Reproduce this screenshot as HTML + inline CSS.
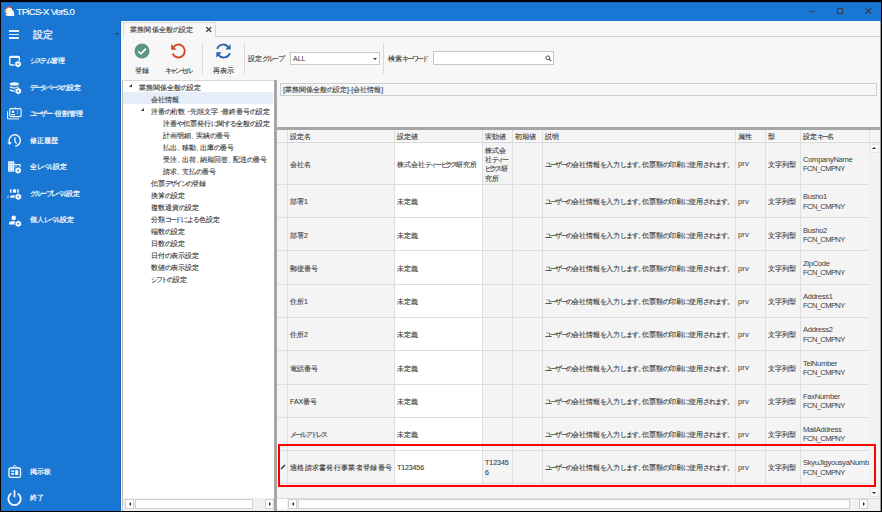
<!DOCTYPE html>
<html><head><meta charset="utf-8"><style>
*{box-sizing:border-box;margin:0;padding:0}
html,body{width:882px;height:512px;overflow:hidden;background:#000;font-family:"Liberation Sans",sans-serif;color:#444;position:relative}
.a{position:absolute}
.t{white-space:nowrap;-webkit-text-stroke:0.12px currentColor}
.k{letter-spacing:-1.8px}
.h{letter-spacing:-1.0px}
.p{letter-spacing:-2.4px}
svg{position:absolute;overflow:visible}
</style></head><body>
<div class="a" style="left:1px;top:2px;width:880px;height:509px;background:#1976d2;"></div>
<svg style="left:4px;top:6px" width="11" height="11" viewBox="0 0 11 11"><path d="M1.5 10 L1.5 5 Q1.8 1.5 5 1.2 Q8 1.5 8.5 4 L10 6 L10.3 10 Z" fill="#fbf8f5"/><path d="M2.5 2.5 Q4.5 0 7 1.2" stroke="#e85a5a" stroke-width="1.3" fill="none"/><path d="M0 4.5 L2.8 4 L2.3 6.3Z" fill="#f7c400"/><path d="M1.2 7 L2.6 7.6" stroke="#1e5ec0" stroke-width="1.1"/><path d="M8.2 1.5 L9 3.5" stroke="#5a4a40" stroke-width="1"/><path d="M1.3 9 L3 10.2" stroke="#6a5a50" stroke-width="1"/></svg>
<div class="a t" style="left:16.5px;top:5.90px;font-size:9.6px;line-height:12px;color:#fff;letter-spacing:-0.72px;-webkit-text-stroke:0.1px #fff">TPiCS-X Ver5.0</div>
<div class="a" style="left:1px;top:2px;width:880px;height:1px;background:#1565c0;"></div>
<div class="a" style="left:809px;top:10.5px;width:6px;height:1.2px;background:#3a3f48;"></div>
<div class="a" style="left:836.5px;top:8.3px;width:6.5px;height:6px;border:1.2px solid #3a3f48"></div>
<svg style="left:864.5px;top:8.2px" width="7" height="6"><path d="M0.5 0.3 L6.3 5.7 M6.3 0.3 L0.5 5.7" stroke="#3a3f48" stroke-width="1.2"/></svg>
<div class="a" style="left:9px;top:30px;width:10px;height:1.5px;background:#e6eef8"></div>
<div class="a" style="left:9px;top:33.5px;width:10px;height:1.5px;background:#e6eef8"></div>
<div class="a" style="left:9px;top:37px;width:10px;height:1.5px;background:#e6eef8"></div>
<div class="a t" style="left:33px;top:29.10px;font-size:9.6px;line-height:12px;color:#eef4fb;-webkit-text-stroke:0.3px #eef4fb">設定</div>
<div class="a" style="left:114.8px;top:32.7px;width:0;height:0;border-left:2px solid transparent;border-right:2px solid transparent;border-top:2.3px solid #3b3b3b"></div>
<div class="a t" style="left:30px;top:55.30px;font-size:7.3px;line-height:11px;color:#f4f8fc;-webkit-text-stroke:0.22px #f4f8fc"><span class="k">システム</span>管理</div>
<div class="a t" style="left:30px;top:81.80px;font-size:7.3px;line-height:11px;color:#f4f8fc;-webkit-text-stroke:0.22px #f4f8fc"><span class="k">データベース</span><span class="h">の</span>設定</div>
<div class="a t" style="left:30px;top:108.30px;font-size:7.3px;line-height:11px;color:#f4f8fc;-webkit-text-stroke:0.22px #f4f8fc"><span class="k">ユーザー</span><span class="p">・</span>役割管理</div>
<div class="a t" style="left:30px;top:134.80px;font-size:7.3px;line-height:11px;color:#f4f8fc;-webkit-text-stroke:0.22px #f4f8fc">修正履歴</div>
<div class="a t" style="left:30px;top:161.30px;font-size:7.3px;line-height:11px;color:#f4f8fc;-webkit-text-stroke:0.22px #f4f8fc">全<span class="k">レベル</span>設定</div>
<div class="a t" style="left:30px;top:187.80px;font-size:7.3px;line-height:11px;color:#f4f8fc;-webkit-text-stroke:0.22px #f4f8fc"><span class="k">グループレベル</span>設定</div>
<div class="a t" style="left:30px;top:214.30px;font-size:7.3px;line-height:11px;color:#f4f8fc;-webkit-text-stroke:0.22px #f4f8fc">個人<span class="k">レベル</span>設定</div>
<div class="a t" style="left:30px;top:465.80px;font-size:7.3px;line-height:11px;color:#f4f8fc;-webkit-text-stroke:0.22px #f4f8fc">掲示板</div>
<div class="a t" style="left:30px;top:492.30px;font-size:7.3px;line-height:11px;color:#f4f8fc;-webkit-text-stroke:0.22px #f4f8fc">終了</div>
<svg style="left:0;top:0" width="120" height="512"><path d="M15 65 L10.8 65 Q9.8 65 9.8 64 L9.8 57.5 Q9.8 56.5 10.8 56.5 L18.3 56.5 Q19.3 56.5 19.3 57.5 L19.3 61" fill="none" stroke="#f4f8fd" stroke-width="1.3"/><rect x="9.8" y="56.2" width="9.5" height="1.8" fill="#f4f8fd"/><circle cx="18" cy="64.1" r="3.7" fill="#1976d2"/><circle cx="18" cy="64.1" r="1.85" fill="none" stroke="#f4f8fd" stroke-width="1.9"/><circle cx="18" cy="64.1" r="2.75" fill="none" stroke="#f4f8fd" stroke-width="0.9" stroke-dasharray="1.1 1.78" transform="rotate(15 18 64.1)"/><ellipse cx="14.3" cy="83.9" rx="4.6" ry="1.6" fill="#f4f8fd"/><path d="M9.8 86.8 Q14.3 89.3 18.8 86.8" fill="none" stroke="#f4f8fd" stroke-width="1.3"/><path d="M9.8 89.9 Q14.3 92.4 18.8 89.9" fill="none" stroke="#f4f8fd" stroke-width="1.3"/><circle cx="18.3" cy="91.1" r="3.7" fill="#1976d2"/><circle cx="18.3" cy="91.1" r="1.85" fill="none" stroke="#f4f8fd" stroke-width="1.9"/><circle cx="18.3" cy="91.1" r="2.75" fill="none" stroke="#f4f8fd" stroke-width="0.9" stroke-dasharray="1.1 1.78" transform="rotate(15 18.3 91.1)"/><path d="M7.6 111.3 L7.6 118.9 L19 118.9" fill="none" stroke="#f4f8fd" stroke-width="1"/><rect x="9.8" y="108.6" width="11.3" height="8" rx="1" fill="#1976d2" stroke="#f4f8fd" stroke-width="1.1"/><circle cx="13" cy="111.8" r="1.3" fill="#f4f8fd"/><rect x="11" y="114" width="4" height="1.3" fill="#f4f8fd"/><path d="M15.3 107.2 L15.3 108.8" stroke="#f4f8fd" stroke-width="0.9"/><path d="M17.6 110 L17.6 114.3" stroke="#f4f8fd" stroke-width="0.8" stroke-dasharray="0.8 0.7"/><path d="M9.7 142.8 A5.6 5.6 0 1 1 15.3 146" fill="none" stroke="#f4f8fd" stroke-width="1.4"/><path d="M7.7 142.6 L11.4 142.6 L9.7 144.6Z" fill="#f4f8fd" stroke="#f4f8fd" stroke-width="0.6"/><path d="M14.9 137.3 L14.9 141.3 L16.6 143.6" fill="none" stroke="#f4f8fd" stroke-width="1.3"/><rect x="8.1" y="161.3" width="6.2" height="10.4" fill="#f4f8fd"/><path d="M9.9 162.8 v7.8 M12.4 162.8 v7.8" stroke="#1976d2" stroke-width="0.9" stroke-dasharray="0.9 1.45"/><path d="M14.3 164.6 L20 164.6 L20 168" fill="none" stroke="#f4f8fd" stroke-width="1.2"/><rect x="15.3" y="166.2" width="1.4" height="1.2" fill="#f4f8fd"/><circle cx="18.1" cy="170.5" r="3.7" fill="#1976d2"/><circle cx="18.1" cy="170.5" r="1.85" fill="none" stroke="#f4f8fd" stroke-width="1.9"/><circle cx="18.1" cy="170.5" r="2.75" fill="none" stroke="#f4f8fd" stroke-width="0.9" stroke-dasharray="1.1 1.78" transform="rotate(15 18.1 170.5)"/><ellipse cx="14.5" cy="191" rx="1.8" ry="2.1" fill="#f4f8fd"/><path d="M11.4 189.3 A1.8 2 0 0 0 11.4 192.7" fill="none" stroke="#f4f8fd" stroke-width="1.4"/><path d="M17.4 189.3 A1.8 2 0 0 1 17.4 192.7" fill="none" stroke="#f4f8fd" stroke-width="1.4"/><path d="M10.2 197.8 L10.2 196.6 Q10.8 195.2 12.5 195.2 L15.2 195.2 L15.2 197.8Z" fill="#f4f8fd"/><path d="M7.2 197.8 Q7.3 195.6 8.8 195.4 L8.3 197.8Z" fill="#f4f8fd"/><circle cx="18.3" cy="196.7" r="3.7" fill="#1976d2"/><circle cx="18.3" cy="196.7" r="1.85" fill="none" stroke="#f4f8fd" stroke-width="1.9"/><circle cx="18.3" cy="196.7" r="2.75" fill="none" stroke="#f4f8fd" stroke-width="0.9" stroke-dasharray="1.1 1.78" transform="rotate(15 18.3 196.7)"/><circle cx="13.7" cy="217.9" r="2.3" fill="#f4f8fd"/><path d="M9 224.6 L9 222.8 Q9.4 221.2 11.5 221.2 L15.2 221.2 L15.2 224.6Z" fill="#f4f8fd"/><circle cx="18.3" cy="223.7" r="3.7" fill="#1976d2"/><circle cx="18.3" cy="223.7" r="1.85" fill="none" stroke="#f4f8fd" stroke-width="1.9"/><circle cx="18.3" cy="223.7" r="2.75" fill="none" stroke="#f4f8fd" stroke-width="0.9" stroke-dasharray="1.1 1.78" transform="rotate(15 18.3 223.7)"/><rect x="9" y="468" width="11.5" height="9.4" rx="1.5" fill="none" stroke="#f4f8fd" stroke-width="1.3"/><path d="M12.3 468 L14.75 465.2 L17.2 468" fill="none" stroke="#f4f8fd" stroke-width="1"/><rect x="11.3" y="470.4" width="2.8" height="1.7" fill="#f4f8fd"/><rect x="11.3" y="473" width="2.8" height="1.8" fill="#f4f8fd"/><rect x="15.2" y="470.2" width="3" height="4.8" fill="#f4f8fd"/><path d="M11.3 493.6 A6.2 6.2 0 1 0 17.7 493.6" fill="none" stroke="#f4f8fd" stroke-width="1.8"/><path d="M14.5 490.2 L14.5 497.2" stroke="#f4f8fd" stroke-width="1.7"/></svg>
<div class="a" style="left:121px;top:21px;width:759px;height:490px;background:#f7f7f7;"></div>
<div class="a" style="left:880px;top:21px;width:1px;height:490px;background:#9a9a9a;"></div>
<div class="a" style="left:215px;top:36px;width:665px;height:1px;background:#d4d4d4;"></div>
<div class="a" style="left:123px;top:22px;width:93px;height:15px;border:1px solid #dadada;border-bottom:none;background:#f7f7f7"></div>
<div class="a t" style="left:130px;top:25.10px;font-size:7px;line-height:10px;color:#444;letter-spacing:0.2px">業務関係全般<span class="h">の</span>設定</div>
<svg style="left:205.8px;top:27.2px" width="6" height="5"><path d="M0.3 0.2 L5.2 4.8 M5.2 0.2 L0.3 4.8" stroke="#222" stroke-width="1.1"/></svg>
<svg style="left:134px;top:43px" width="16" height="16"><circle cx="8" cy="8" r="7.5" fill="#5a977d"/><path d="M4.3 8.3 L7 10.8 L11.8 5.6" fill="none" stroke="#fff" stroke-width="1.8"/></svg>
<svg style="left:170px;top:43px" width="17" height="17"><path d="M2.4 5.8 A6.4 6.4 0 1 1 2.6 10.7" fill="none" stroke="#cf4b27" stroke-width="2"/><path d="M1.2 0.9 L1.2 6.7 L6.6 6.7Z" fill="#cf4b27"/></svg>
<svg style="left:215px;top:43px" width="17" height="17"><path d="M2.2 5.9 A6.3 6.3 0 0 1 13.6 4.6" fill="none" stroke="#2b65ab" stroke-width="1.9"/><path d="M15.7 1.2 L15.7 6.6 L10.4 6.6Z" fill="#2b65ab"/><path d="M14.8 10.1 A6.3 6.3 0 0 1 3.4 11.4" fill="none" stroke="#2b65ab" stroke-width="1.9"/><path d="M1.3 14.8 L1.3 9.3 L6.6 9.3Z" fill="#2b65ab"/></svg>
<div class="a t" style="left:135px;top:65.60px;font-size:7px;line-height:10px;color:#3c3c3c;letter-spacing:0px;">登録</div>
<div class="a t" style="left:165px;top:65.60px;font-size:7px;line-height:10px;color:#3c3c3c;letter-spacing:0px;"><span class="k">キャンセル</span></div>
<div class="a t" style="left:213px;top:65.60px;font-size:7px;line-height:10px;color:#3c3c3c;letter-spacing:0px;">再表示</div>
<div class="a" style="left:202px;top:43px;width:1px;height:31px;background:#dadada;"></div>
<div class="a" style="left:244px;top:43px;width:1px;height:31px;background:#dadada;"></div>
<div class="a" style="left:383px;top:43px;width:1px;height:31px;background:#dadada;"></div>
<div class="a t" style="left:248px;top:54.10px;font-size:7px;line-height:10px;color:#3c3c3c;letter-spacing:0px;">設定<span class="k">グループ</span></div>
<div class="a" style="left:290px;top:52px;width:90px;height:13px;background:#fff;border:1px solid #cbcbcb"></div>
<div class="a t" style="left:293px;top:54.10px;font-size:7px;line-height:10px;color:#3a3a3a;-webkit-text-stroke:0">ALL</div>
<div class="a" style="left:373px;top:57.5px;width:0;height:0;border-left:2.5px solid transparent;border-right:2.5px solid transparent;border-top:2.5px solid #333"></div>
<div class="a t" style="left:387.5px;top:54.10px;font-size:7px;line-height:10px;color:#3c3c3c;letter-spacing:0px;">検索<span class="k">キーワード</span></div>
<div class="a" style="left:433px;top:51px;width:121px;height:14px;background:#fff;border:1px solid #c6c6c6"></div>
<svg style="left:545px;top:55px" width="8" height="8"><circle cx="2.8" cy="2.8" r="1.9" fill="none" stroke="#555" stroke-width="1"/><path d="M4.2 4.2 L6.2 6.2" stroke="#555" stroke-width="1.2"/></svg>
<div class="a" style="left:122px;top:80px;width:152px;height:431px;background:#d8d8d8;"></div>
<div class="a" style="left:123px;top:81px;width:151px;height:429px;background:#ffffff;"></div>
<div class="a" style="left:122px;top:81px;width:1px;height:430px;background:#bdbdbd;"></div>
<div class="a" style="left:120px;top:21px;width:1px;height:490px;background:#1466c4;"></div>
<div class="a" style="left:123px;top:92px;width:150px;height:12px;background:#e5edf8;"></div>
<div class="a" style="left:128.8px;top:84.4px;width:0;height:0;border-left:3.5px solid transparent;border-bottom:3.5px solid #303030"></div>
<div class="a t" style="left:139px;top:82.60px;font-size:7px;line-height:10px;color:#3c3c3c;letter-spacing:0px;">業務関係全般<span class="h">の</span>設定</div>
<div class="a t" style="left:151px;top:94.60px;font-size:7px;line-height:10px;color:#3c3c3c;letter-spacing:0px;">会社情報</div>
<div class="a" style="left:140.8px;top:108.4px;width:0;height:0;border-left:3.5px solid transparent;border-bottom:3.5px solid #303030"></div>
<div class="a t" style="left:151px;top:106.60px;font-size:7px;line-height:10px;color:#3c3c3c;letter-spacing:0px;">注番<span class="h">の</span>桁数<span class="p">・</span>先頭文字<span class="p">・</span>最終番号<span class="h">の</span>設定</div>
<div class="a t" style="left:163px;top:118.60px;font-size:7px;line-height:10px;color:#3c3c3c;letter-spacing:0px;">注番<span class="h">や</span>伝票発行<span class="h">に</span>関<span class="h">する</span>全般<span class="h">の</span>設定</div>
<div class="a t" style="left:163px;top:130.60px;font-size:7px;line-height:10px;color:#3c3c3c;letter-spacing:0px;">計画明細<span class="p">、</span>実績<span class="h">の</span>番号</div>
<div class="a t" style="left:163px;top:142.60px;font-size:7px;line-height:10px;color:#3c3c3c;letter-spacing:0px;">払出<span class="p">、</span>移動<span class="p">、</span>出庫<span class="h">の</span>番号</div>
<div class="a t" style="left:163px;top:154.60px;font-size:7px;line-height:10px;color:#3c3c3c;letter-spacing:0px;">受注<span class="p">、</span>出荷<span class="p">、</span>納期回答<span class="p">、</span>配送<span class="h">の</span>番号</div>
<div class="a t" style="left:163px;top:166.60px;font-size:7px;line-height:10px;color:#3c3c3c;letter-spacing:0px;">請求<span class="p">、</span>支払<span class="h">の</span>番号</div>
<div class="a t" style="left:151px;top:178.60px;font-size:7px;line-height:10px;color:#3c3c3c;letter-spacing:0px;">伝票<span class="k">デザイン</span><span class="h">の</span>登録</div>
<div class="a t" style="left:151px;top:190.60px;font-size:7px;line-height:10px;color:#3c3c3c;letter-spacing:0px;">換算<span class="h">の</span>設定</div>
<div class="a t" style="left:151px;top:202.60px;font-size:7px;line-height:10px;color:#3c3c3c;letter-spacing:0px;">複数通貨<span class="h">の</span>設定</div>
<div class="a t" style="left:151px;top:214.60px;font-size:7px;line-height:10px;color:#3c3c3c;letter-spacing:0px;">分類<span class="k">コード</span><span class="h">による</span>色設定</div>
<div class="a t" style="left:151px;top:226.60px;font-size:7px;line-height:10px;color:#3c3c3c;letter-spacing:0px;">端数<span class="h">の</span>設定</div>
<div class="a t" style="left:151px;top:238.60px;font-size:7px;line-height:10px;color:#3c3c3c;letter-spacing:0px;">日数<span class="h">の</span>設定</div>
<div class="a t" style="left:151px;top:250.60px;font-size:7px;line-height:10px;color:#3c3c3c;letter-spacing:0px;">日付<span class="h">の</span>表示設定</div>
<div class="a t" style="left:151px;top:262.60px;font-size:7px;line-height:10px;color:#3c3c3c;letter-spacing:0px;">数値<span class="h">の</span>表示設定</div>
<div class="a t" style="left:151px;top:274.60px;font-size:7px;line-height:10px;color:#3c3c3c;letter-spacing:0px;"><span class="k">シフト</span><span class="h">の</span>設定</div>
<div class="a" style="left:123px;top:498px;width:151px;height:13px;background:#f0f0f0;"></div>
<div class="a" style="left:125px;top:499px;width:9px;height:10px;background:#fff;border:1px solid #cfcfcf"></div>
<div class="a" style="left:128.5px;top:502px;width:0;height:0;border-top:2.5px solid transparent;border-bottom:2.5px solid transparent;border-right:2.5px solid #222"></div>
<div class="a" style="left:135px;top:499px;width:118px;height:10px;background:#fff;border:1px solid #cfcfcf"></div>
<div class="a" style="left:265px;top:499px;width:9px;height:10px;background:#fff;border:1px solid #cfcfcf"></div>
<div class="a" style="left:268.5px;top:502px;width:0;height:0;border-top:2.5px solid transparent;border-bottom:2.5px solid transparent;border-left:2.5px solid #222"></div>
<div class="a" style="left:274px;top:80px;width:3px;height:431px;background:#a6a6a6;"></div>
<div class="a" style="left:280px;top:83px;width:597px;height:13px;border:1px solid #cfcfcf;background:#f7f7f7"></div>
<div class="a t" style="left:283px;top:85.10px;font-size:7px;line-height:10px;color:#444;letter-spacing:0px;">[業務関係全般<span class="h">の</span>設定]-[会社情報]</div>
<div class="a" style="left:277px;top:127px;width:603px;height:3px;background:#a6a6a6;"></div>
<div class="a" style="left:277px;top:130px;width:603px;height:381px;background:#f4f4f4;"></div>
<div class="a" style="left:277px;top:130px;width:603px;height:12px;background:#f4f4f4;"></div>
<div class="a" style="left:277px;top:141px;width:592px;height:1px;background:#fbfbfb;"></div>
<div class="a" style="left:395px;top:143px;width:87px;height:41px;background:#ffffff;"></div>
<div class="a" style="left:395px;top:185px;width:87px;height:32px;background:#ffffff;"></div>
<div class="a" style="left:395px;top:218px;width:87px;height:32px;background:#ffffff;"></div>
<div class="a" style="left:395px;top:251px;width:87px;height:33px;background:#ffffff;"></div>
<div class="a" style="left:395px;top:285px;width:87px;height:32px;background:#ffffff;"></div>
<div class="a" style="left:395px;top:318px;width:87px;height:32px;background:#ffffff;"></div>
<div class="a" style="left:395px;top:351px;width:87px;height:33px;background:#ffffff;"></div>
<div class="a" style="left:395px;top:385px;width:87px;height:32px;background:#ffffff;"></div>
<div class="a" style="left:395px;top:418px;width:87px;height:32px;background:#ffffff;"></div>
<div class="a" style="left:395px;top:451px;width:87px;height:32px;background:#ffffff;"></div>
<div class="a" style="left:277px;top:142px;width:592px;height:1px;background:#dedede;"></div>
<div class="a" style="left:277px;top:184px;width:592px;height:1px;background:#dedede;"></div>
<div class="a" style="left:277px;top:217px;width:592px;height:1px;background:#dedede;"></div>
<div class="a" style="left:277px;top:250px;width:592px;height:1px;background:#dedede;"></div>
<div class="a" style="left:277px;top:284px;width:592px;height:1px;background:#dedede;"></div>
<div class="a" style="left:277px;top:317px;width:592px;height:1px;background:#dedede;"></div>
<div class="a" style="left:277px;top:350px;width:592px;height:1px;background:#dedede;"></div>
<div class="a" style="left:277px;top:384px;width:592px;height:1px;background:#dedede;"></div>
<div class="a" style="left:277px;top:417px;width:592px;height:1px;background:#dedede;"></div>
<div class="a" style="left:277px;top:450px;width:592px;height:1px;background:#dedede;"></div>
<div class="a" style="left:277px;top:483px;width:592px;height:1px;background:#dedede;"></div>
<div class="a" style="left:287px;top:130px;width:1px;height:354px;background:#dedede;"></div>
<div class="a" style="left:394px;top:130px;width:1px;height:354px;background:#dedede;"></div>
<div class="a" style="left:482px;top:130px;width:1px;height:354px;background:#dedede;"></div>
<div class="a" style="left:512px;top:130px;width:1px;height:354px;background:#dedede;"></div>
<div class="a" style="left:542px;top:130px;width:1px;height:354px;background:#dedede;"></div>
<div class="a" style="left:735px;top:130px;width:1px;height:354px;background:#dedede;"></div>
<div class="a" style="left:765px;top:130px;width:1px;height:354px;background:#dedede;"></div>
<div class="a" style="left:800px;top:130px;width:1px;height:354px;background:#dedede;"></div>
<div class="a" style="left:869px;top:130px;width:1px;height:354px;background:#dedede;"></div>
<div class="a" style="left:277px;top:142px;width:603px;height:1px;background:#d6d6d6;"></div>
<div class="a t" style="left:290px;top:132.10px;font-size:7px;line-height:10px;color:#3c3c3c;letter-spacing:0px;">設定名</div>
<div class="a t" style="left:397px;top:132.10px;font-size:7px;line-height:10px;color:#3c3c3c;letter-spacing:0px;">設定値</div>
<div class="a t" style="left:485px;top:132.10px;font-size:7px;line-height:10px;color:#3c3c3c;letter-spacing:0px;">実効値</div>
<div class="a t" style="left:515px;top:132.10px;font-size:7px;line-height:10px;color:#3c3c3c;letter-spacing:0px;">初期値</div>
<div class="a t" style="left:545px;top:132.10px;font-size:7px;line-height:10px;color:#3c3c3c;letter-spacing:0px;">説明</div>
<div class="a t" style="left:738px;top:132.10px;font-size:7px;line-height:10px;color:#3c3c3c;letter-spacing:0px;">属性</div>
<div class="a t" style="left:768px;top:132.10px;font-size:7px;line-height:10px;color:#3c3c3c;letter-spacing:0px;">型</div>
<div class="a t" style="left:803px;top:132.10px;font-size:7px;line-height:10px;color:#3c3c3c;letter-spacing:0px;">設定<span class="k">キー</span>名</div>
<div class="a t" style="left:290px;top:159.80px;font-size:7px;line-height:10px;color:#3c3c3c;letter-spacing:0px;">会社名</div>
<div class="a t" style="left:397px;top:159.80px;font-size:7px;line-height:10px;color:#3c3c3c;letter-spacing:0px;">株式会社<span class="k">ティーピクス</span>研究所</div>
<div class="a t" style="left:485px;top:145.89999999999998px;font-size:7px;line-height:9.3px;color:#404040">株式会<br>社<span class="k">ティー</span><br><span class="k">ピクス</span>研<br>究所</div>
<div class="a t" style="left:545px;top:159.80px;font-size:7px;line-height:10px;color:#3c3c3c;letter-spacing:0px;"><span class="k">ユーザー</span><span class="h">の</span>会社情報<span class="h">を</span>入力<span class="h">します</span><span class="p">。</span>伝票類<span class="h">の</span>印刷<span class="h">に</span>使用<span class="h">されます</span><span class="p">。</span></div>
<div class="a t" style="left:738px;top:159.40px;font-size:7.8px;line-height:10.8px;color:#3c3c3c;-webkit-text-stroke:0">prv</div>
<div class="a t" style="left:768px;top:159.80px;font-size:7px;line-height:10px;color:#3c3c3c;letter-spacing:0px;">文字列型</div>
<div class="a t" style="left:803px;top:154.79999999999998px;font-size:7.6px;line-height:9.3px;color:#404040;letter-spacing:-0.3px;-webkit-text-stroke:0">CompanyName<br><span style="letter-spacing:-0.62px">FCN_CMPNY</span></div>
<div class="a t" style="left:290px;top:197.42px;font-size:7px;line-height:10px;color:#3c3c3c;letter-spacing:0px;">部署1</div>
<div class="a t" style="left:397px;top:197.42px;font-size:7px;line-height:10px;color:#3c3c3c;letter-spacing:0px;">未定義</div>
<div class="a t" style="left:545px;top:197.42px;font-size:7px;line-height:10px;color:#3c3c3c;letter-spacing:0px;"><span class="k">ユーザー</span><span class="h">の</span>会社情報<span class="h">を</span>入力<span class="h">します</span><span class="p">。</span>伝票類<span class="h">の</span>印刷<span class="h">に</span>使用<span class="h">されます</span><span class="p">。</span></div>
<div class="a t" style="left:738px;top:197.02px;font-size:7.8px;line-height:10.8px;color:#3c3c3c;-webkit-text-stroke:0">prv</div>
<div class="a t" style="left:768px;top:197.42px;font-size:7px;line-height:10px;color:#3c3c3c;letter-spacing:0px;">文字列型</div>
<div class="a t" style="left:803px;top:192.42499999999998px;font-size:7.6px;line-height:9.3px;color:#404040;letter-spacing:-0.3px;-webkit-text-stroke:0">Busho1<br><span style="letter-spacing:-0.62px">FCN_CMPNY</span></div>
<div class="a t" style="left:290px;top:230.67px;font-size:7px;line-height:10px;color:#3c3c3c;letter-spacing:0px;">部署2</div>
<div class="a t" style="left:397px;top:230.67px;font-size:7px;line-height:10px;color:#3c3c3c;letter-spacing:0px;">未定義</div>
<div class="a t" style="left:545px;top:230.67px;font-size:7px;line-height:10px;color:#3c3c3c;letter-spacing:0px;"><span class="k">ユーザー</span><span class="h">の</span>会社情報<span class="h">を</span>入力<span class="h">します</span><span class="p">。</span>伝票類<span class="h">の</span>印刷<span class="h">に</span>使用<span class="h">されます</span><span class="p">。</span></div>
<div class="a t" style="left:738px;top:230.27px;font-size:7.8px;line-height:10.8px;color:#3c3c3c;-webkit-text-stroke:0">prv</div>
<div class="a t" style="left:768px;top:230.67px;font-size:7px;line-height:10px;color:#3c3c3c;letter-spacing:0px;">文字列型</div>
<div class="a t" style="left:803px;top:225.67499999999998px;font-size:7.6px;line-height:9.3px;color:#404040;letter-spacing:-0.3px;-webkit-text-stroke:0">Busho2<br><span style="letter-spacing:-0.62px">FCN_CMPNY</span></div>
<div class="a t" style="left:290px;top:263.93px;font-size:7px;line-height:10px;color:#3c3c3c;letter-spacing:0px;">郵便番号</div>
<div class="a t" style="left:397px;top:263.93px;font-size:7px;line-height:10px;color:#3c3c3c;letter-spacing:0px;">未定義</div>
<div class="a t" style="left:545px;top:263.93px;font-size:7px;line-height:10px;color:#3c3c3c;letter-spacing:0px;"><span class="k">ユーザー</span><span class="h">の</span>会社情報<span class="h">を</span>入力<span class="h">します</span><span class="p">。</span>伝票類<span class="h">の</span>印刷<span class="h">に</span>使用<span class="h">されます</span><span class="p">。</span></div>
<div class="a t" style="left:738px;top:263.53px;font-size:7.8px;line-height:10.8px;color:#3c3c3c;-webkit-text-stroke:0">prv</div>
<div class="a t" style="left:768px;top:263.93px;font-size:7px;line-height:10px;color:#3c3c3c;letter-spacing:0px;">文字列型</div>
<div class="a t" style="left:803px;top:258.925px;font-size:7.6px;line-height:9.3px;color:#404040;letter-spacing:-0.3px;-webkit-text-stroke:0">ZipCode<br><span style="letter-spacing:-0.62px">FCN_CMPNY</span></div>
<div class="a t" style="left:290px;top:297.18px;font-size:7px;line-height:10px;color:#3c3c3c;letter-spacing:0px;">住所1</div>
<div class="a t" style="left:397px;top:297.18px;font-size:7px;line-height:10px;color:#3c3c3c;letter-spacing:0px;">未定義</div>
<div class="a t" style="left:545px;top:297.18px;font-size:7px;line-height:10px;color:#3c3c3c;letter-spacing:0px;"><span class="k">ユーザー</span><span class="h">の</span>会社情報<span class="h">を</span>入力<span class="h">します</span><span class="p">。</span>伝票類<span class="h">の</span>印刷<span class="h">に</span>使用<span class="h">されます</span><span class="p">。</span></div>
<div class="a t" style="left:738px;top:296.78px;font-size:7.8px;line-height:10.8px;color:#3c3c3c;-webkit-text-stroke:0">prv</div>
<div class="a t" style="left:768px;top:297.18px;font-size:7px;line-height:10px;color:#3c3c3c;letter-spacing:0px;">文字列型</div>
<div class="a t" style="left:803px;top:292.175px;font-size:7.6px;line-height:9.3px;color:#404040;letter-spacing:-0.3px;-webkit-text-stroke:0">Address1<br><span style="letter-spacing:-0.62px">FCN_CMPNY</span></div>
<div class="a t" style="left:290px;top:330.43px;font-size:7px;line-height:10px;color:#3c3c3c;letter-spacing:0px;">住所2</div>
<div class="a t" style="left:397px;top:330.43px;font-size:7px;line-height:10px;color:#3c3c3c;letter-spacing:0px;">未定義</div>
<div class="a t" style="left:545px;top:330.43px;font-size:7px;line-height:10px;color:#3c3c3c;letter-spacing:0px;"><span class="k">ユーザー</span><span class="h">の</span>会社情報<span class="h">を</span>入力<span class="h">します</span><span class="p">。</span>伝票類<span class="h">の</span>印刷<span class="h">に</span>使用<span class="h">されます</span><span class="p">。</span></div>
<div class="a t" style="left:738px;top:330.03px;font-size:7.8px;line-height:10.8px;color:#3c3c3c;-webkit-text-stroke:0">prv</div>
<div class="a t" style="left:768px;top:330.43px;font-size:7px;line-height:10px;color:#3c3c3c;letter-spacing:0px;">文字列型</div>
<div class="a t" style="left:803px;top:325.425px;font-size:7.6px;line-height:9.3px;color:#404040;letter-spacing:-0.3px;-webkit-text-stroke:0">Address2<br><span style="letter-spacing:-0.62px">FCN_CMPNY</span></div>
<div class="a t" style="left:290px;top:363.68px;font-size:7px;line-height:10px;color:#3c3c3c;letter-spacing:0px;">電話番号</div>
<div class="a t" style="left:397px;top:363.68px;font-size:7px;line-height:10px;color:#3c3c3c;letter-spacing:0px;">未定義</div>
<div class="a t" style="left:545px;top:363.68px;font-size:7px;line-height:10px;color:#3c3c3c;letter-spacing:0px;"><span class="k">ユーザー</span><span class="h">の</span>会社情報<span class="h">を</span>入力<span class="h">します</span><span class="p">。</span>伝票類<span class="h">の</span>印刷<span class="h">に</span>使用<span class="h">されます</span><span class="p">。</span></div>
<div class="a t" style="left:738px;top:363.28px;font-size:7.8px;line-height:10.8px;color:#3c3c3c;-webkit-text-stroke:0">prv</div>
<div class="a t" style="left:768px;top:363.68px;font-size:7px;line-height:10px;color:#3c3c3c;letter-spacing:0px;">文字列型</div>
<div class="a t" style="left:803px;top:358.675px;font-size:7.6px;line-height:9.3px;color:#404040;letter-spacing:-0.3px;-webkit-text-stroke:0">TelNumber<br><span style="letter-spacing:-0.62px">FCN_CMPNY</span></div>
<div class="a t" style="left:290px;top:396.93px;font-size:7px;line-height:10px;color:#3c3c3c;letter-spacing:0px;">FAX番号</div>
<div class="a t" style="left:397px;top:396.93px;font-size:7px;line-height:10px;color:#3c3c3c;letter-spacing:0px;">未定義</div>
<div class="a t" style="left:545px;top:396.93px;font-size:7px;line-height:10px;color:#3c3c3c;letter-spacing:0px;"><span class="k">ユーザー</span><span class="h">の</span>会社情報<span class="h">を</span>入力<span class="h">します</span><span class="p">。</span>伝票類<span class="h">の</span>印刷<span class="h">に</span>使用<span class="h">されます</span><span class="p">。</span></div>
<div class="a t" style="left:738px;top:396.53px;font-size:7.8px;line-height:10.8px;color:#3c3c3c;-webkit-text-stroke:0">prv</div>
<div class="a t" style="left:768px;top:396.93px;font-size:7px;line-height:10px;color:#3c3c3c;letter-spacing:0px;">文字列型</div>
<div class="a t" style="left:803px;top:391.925px;font-size:7.6px;line-height:9.3px;color:#404040;letter-spacing:-0.3px;-webkit-text-stroke:0">FaxNumber<br><span style="letter-spacing:-0.62px">FCN_CMPNY</span></div>
<div class="a t" style="left:290px;top:430.18px;font-size:7px;line-height:10px;color:#3c3c3c;letter-spacing:0px;"><span class="k">メールアドレス</span></div>
<div class="a t" style="left:397px;top:430.18px;font-size:7px;line-height:10px;color:#3c3c3c;letter-spacing:0px;">未定義</div>
<div class="a t" style="left:545px;top:430.18px;font-size:7px;line-height:10px;color:#3c3c3c;letter-spacing:0px;"><span class="k">ユーザー</span><span class="h">の</span>会社情報<span class="h">を</span>入力<span class="h">します</span><span class="p">。</span>伝票類<span class="h">の</span>印刷<span class="h">に</span>使用<span class="h">されます</span><span class="p">。</span></div>
<div class="a t" style="left:738px;top:429.78px;font-size:7.8px;line-height:10.8px;color:#3c3c3c;-webkit-text-stroke:0">prv</div>
<div class="a t" style="left:768px;top:430.18px;font-size:7px;line-height:10px;color:#3c3c3c;letter-spacing:0px;">文字列型</div>
<div class="a t" style="left:803px;top:425.175px;font-size:7.6px;line-height:9.3px;color:#404040;letter-spacing:-0.3px;-webkit-text-stroke:0">MailAddress<br><span style="letter-spacing:-0.62px">FCN_CMPNY</span></div>
<div class="a t" style="left:290px;top:463.43px;font-size:7px;line-height:10px;color:#3c3c3c;letter-spacing:0.3px;">適格請求書発行事業者登録番号</div>
<div class="a t" style="left:397px;top:463.43px;font-size:7px;line-height:10px;color:#3c3c3c;letter-spacing:-0.1px">T123456</div>
<div class="a t" style="left:485px;top:457.825px;font-size:7px;line-height:10px;color:#404040">T12345<br>6</div>
<div class="a t" style="left:545px;top:463.43px;font-size:7px;line-height:10px;color:#3c3c3c;letter-spacing:0px;"><span class="k">ユーザー</span><span class="h">の</span>会社情報<span class="h">を</span>入力<span class="h">します</span><span class="p">。</span>伝票類<span class="h">の</span>印刷<span class="h">に</span>使用<span class="h">されます</span><span class="p">。</span></div>
<div class="a t" style="left:738px;top:463.03px;font-size:7.8px;line-height:10.8px;color:#3c3c3c;-webkit-text-stroke:0">prv</div>
<div class="a t" style="left:768px;top:463.43px;font-size:7px;line-height:10px;color:#3c3c3c;letter-spacing:0px;">文字列型</div>
<div class="a t" style="left:803px;top:458.425px;font-size:7.6px;line-height:9.3px;color:#404040;letter-spacing:-0.3px;-webkit-text-stroke:0">SkyuJigyousyaNumb<br><span style="letter-spacing:-0.62px">FCN_CMPNY</span></div>
<svg style="left:280px;top:464px" width="6" height="6"><path d="M0.5 5.5 L1 4 L4.5 0.5 L5.5 1.5 L2 5Z" fill="#333"/></svg>
<div class="a" style="left:869px;top:143px;width:11px;height:355px;background:#f2f2f2;"></div>
<div class="a" style="left:870px;top:144px;width:9px;height:9px;background:#fafafa;border:1px solid #e6e6e6"></div>
<div class="a" style="left:872px;top:147px;width:0;height:0;border-left:2.5px solid transparent;border-right:2.5px solid transparent;border-bottom:2.5px solid #222"></div>
<div class="a" style="left:870px;top:488px;width:9px;height:9px;background:#fafafa;border:1px solid #e6e6e6"></div>
<div class="a" style="left:872px;top:491.5px;width:0;height:0;border-left:2.5px solid transparent;border-right:2.5px solid transparent;border-top:2.5px solid #222"></div>
<div class="a" style="left:277px;top:498px;width:603px;height:13px;background:#f0f0f0;"></div>
<div class="a" style="left:277px;top:498px;width:603px;height:1px;background:#dcdcdc;"></div>
<div class="a" style="left:277px;top:499px;width:10px;height:10px;background:#ffffff;"></div>
<div class="a" style="left:288px;top:499px;width:9px;height:10px;background:#fff;border:1px solid #cfcfcf"></div>
<div class="a" style="left:291.5px;top:502px;width:0;height:0;border-top:2.5px solid transparent;border-bottom:2.5px solid transparent;border-right:2.5px solid #222"></div>
<div class="a" style="left:298px;top:499px;width:552px;height:10px;background:#fff;border:1px solid #cfcfcf"></div>
<div class="a" style="left:859px;top:499px;width:9px;height:10px;background:#fff;border:1px solid #cfcfcf"></div>
<div class="a" style="left:862.5px;top:502px;width:0;height:0;border-top:2.5px solid transparent;border-bottom:2.5px solid transparent;border-left:2.5px solid #222"></div>
<div class="a" style="left:278px;top:444px;width:598px;height:43px;border:2px solid #ff0000"></div>
</body></html>
